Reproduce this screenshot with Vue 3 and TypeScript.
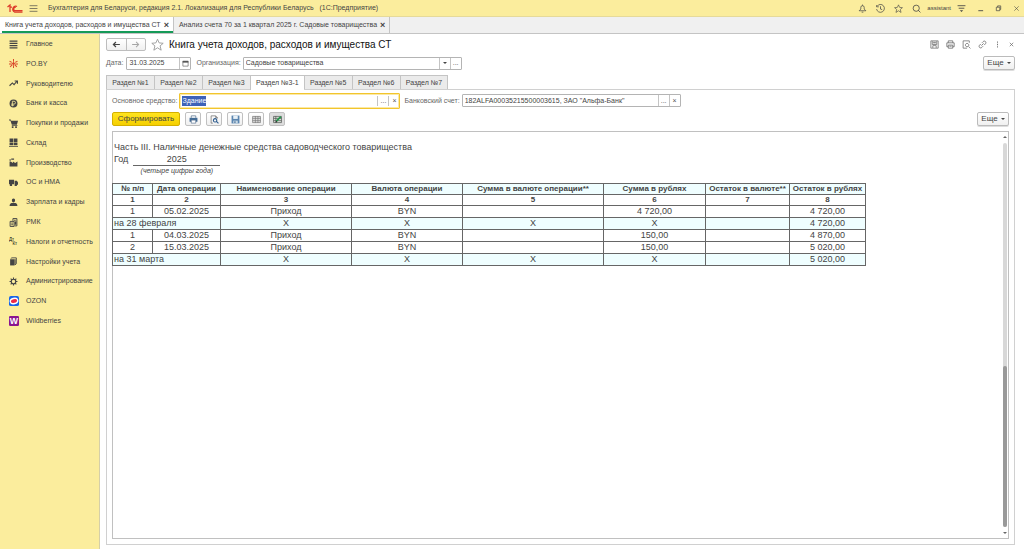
<script setup lang="ts">
import { onMounted, ref } from 'vue'

interface Part { d: string; fill?: string; stroke?: string; width?: number }
interface MenuItem { label: string; icon: string }
interface Row { total: boolean; cells: string[] }

const line = (d: string, width = 1.3, stroke = 'currentColor'): Part => ({ d, fill: 'none', stroke, width })
const solid = (d: string, fill = 'currentColor'): Part => ({ d, fill })

const icons: Record<string, Part[]> = {
  list: [line('M1 2h14M1 6h14M1 10h14M1 14h14', 2)],
  spark: [line('M8 0v5M8 11v5M1 4l4 2M15 4l-4 2M2 14l4-4M14 14l-4-4M0 9h5M11 9h5', 1.8, '#d9482b'), solid('M8 5l3 3-3 3-3-3z', '#d9482b')],
  trend: [line('M1 12l5-5 3 3 5-6M10 3.500h5v5', 2)],
  coin: [solid('M8 1a7 7 0 1 0 0 14A7 7 0 0 0 8 1z'), line('M6 13V4h3a2.500 2.500 0 0 1 0 5H4M4 11h5', 1.4, '#fbed9d')],
  cart: [solid('M0 1h3l1 2h12l-2 7H5L2.500 2.500H0zM5 11h10v1.500H5zM5 13h3v3H5zM11 13h3v3h-3z')],
  store: [solid('M1 1h6.500v6H1zM8.500 1H15v6H8.500zM1 8h6.500v5H1zM8.500 8H15v5H8.500zM0 14h16v1.500H0z')],
  factory: [solid('M1 15V6h2l4 3V6l4 3 4-3v9zM1 5V2h2v3zM4 1h5v2H4z')],
  truck: [solid('M0 3h9v8H0zM10 5h4l2 3v4h-6zM1.500 11h4v3h-4zM10 11h4v3h-4z')],
  person: [solid('M8 1c4 0 3.500 7 0 7S4 1 8 1zM1 14c0-4 3-5 5-5h4c2 0 5 1 5 5z')],
  register: [line('M2 6h7v9H2zM7 5V1h7v13h-4M4 9h3M4 12h3M9 4h3', 1.7), solid('M10 6h3v6h-3z')],
  books: [solid('M2 4h8v11H2z'), line('M3 3l2-1.500h8V12l-2 2M11 4V14', 1.6)],
  gear: [line('M8 4a4 4 0 1 0 0 8 4 4 0 0 0 0-8zM8 1v3M8 12v3M1 8h3M12 8h3M3 3l2 2M11 11l2 2M3 13l2-2M11 5l2-2', 2)],
  bell: [line('M2 12h12l-3-3V6a3 3 0 0 0-6 0v3zM6.500 14.500h3M8 1v2')],
  history: [line('M2 4a7 7 0 1 1-1 5M1 2v3h4M8 4v5l3 1')],
  star: [line('M8 1.500l2 4.500 5 .5-3.800 3.200L12.500 15 8 12l-4.500 3 1.300-5.300L1 6.500 6 6z', 1.1)],
  search: [line('M7.500 2a5.500 5.500 0 1 0 0 11 5.500 5.500 0 0 0 0-11zM11 11l4 4', 1.4)],
  filter: [line('M1 3h14M3 7.500h10', 1.5), solid('M5 11h6l-3 3z')],
  restore: [line('M3 5h8v8H3zM6 5V2h7v8h-2', 1.6)],
  cross: [line('M3 3l10 10M13 3L3 13')],
  smallCross: [line('M4 4l8 8M12 4l-8 8', 1.6)],
  menu: [line('M1 3h14M1 8h14M1 13h14', 1.2)],
  disk: [line('M1.500 1.500h13v13h-13zM4 2v6h8V2M5 14v-4h6v4M6 3v3M8 3v3M10 3v3', 1.3)],
  printer: [line('M4 5V1.500h8V5M4 12H1.500V5h13v7H12M4 9h8v5.500H4zM6 11h4', 1.4)],
  preview: [line('M13 5V1.500H2v13h7M9 6a3 3 0 1 0 .1 0zM11.500 11.500l3.500 3.500', 1.3)],
  link: [line('M6 10l4-4M7 5l2-2c3-3 7 1 4 4l-2 2M9 11l-2 2c-3 3-7-1-4-4l2-2', 1.4)],
  dots: [solid('M7 1h2v3H7zM7 6.500h2v3H7zM7 12h2v3H7z')],
  back: [line('M2 8h12M7 3.500L2.500 8 7 12.500', 2.2)],
  forward: [line('M2 8h12M9 3.500L13.500 8 9 12.500', 1.8)],
  calendar: [line('M2 3h12v11H2z', 1.4), solid('M1.500 2h13v4h-13z')],
  printBlue: [solid('M4 1h8v4H4z', '#fff'), line('M4 5V1.500h8V5', 1.3, '#546f8c'), solid('M1 5h14v7H1z', '#426b96'), solid('M4 9h8v6H4z', '#fff'), line('M4 9h8v5.500H4z', 1.2, '#546f8c')],
  previewBlue: [line('M5 14.500H2v-13h8l3 3v2M10 1.500v3h3', 1.2, '#666'), line('M9 6.500a3 3 0 1 0 .1 0zM11.500 11.500l3.500 3.500', 2, '#315f91')],
  diskBlue: [solid('M1 1h14v14H1z', '#5b86b0'), solid('M4 1h8v6H4z', '#e8f1f7'), solid('M4 10h8v5H4z', '#c9dae6'), solid('M6 11h2v3H6z', '#426b96')],
  grid: [solid('M1 2h14v12H1z', '#ddd'), line('M1 2.500h14v11H1zM1 6h14M1 10h14M6 2v12M10.500 2v12', 1.2, '#777')],
  gridEdit: [solid('M1 2h14v12H1z', '#d9e5da'), line('M1 2.500h14v11H1zM1 6h14M1 10h14M5 2v12', 1.3, '#555'), line('M6 11l8-8', 3, '#24964d'), line('M5 13l2-2', 2, '#333')],
}

const menu: MenuItem[] = [
  { label: 'Главное', icon: 'list' },
  { label: 'PO.BY', icon: 'spark' },
  { label: 'Руководителю', icon: 'trend' },
  { label: 'Банк и касса', icon: 'coin' },
  { label: 'Покупки и продажи', icon: 'cart' },
  { label: 'Склад', icon: 'store' },
  { label: 'Производство', icon: 'factory' },
  { label: 'ОС и НМА', icon: 'truck' },
  { label: 'Зарплата и кадры', icon: 'person' },
  { label: 'РМК', icon: 'register' },
  { label: 'Налоги и отчетность', icon: 'taxes' },
  { label: 'Настройки учета', icon: 'books' },
  { label: 'Администрирование', icon: 'gear' },
  { label: 'OZON', icon: 'ozon' },
  { label: 'Wildberries', icon: 'wb' },
]

const sections = ['Раздел №1', 'Раздел №2', 'Раздел №3', 'Раздел №3-1', 'Раздел №5', 'Раздел №6', 'Раздел №7']
const activeSection = ref('Раздел №3-1')

const columns = ['№ п/п', 'Дата операции', 'Наименование операции', 'Валюта операции', 'Сумма в валюте операции**', 'Сумма в рублях', 'Остаток в валюте**', 'Остаток в рублях']
const rows: Row[] = [
  { total: false, cells: ['1', '05.02.2025', 'Приход', 'BYN', '', '4 720,00', '', '4 720,00'] },
  { total: true, cells: ['на 28 февраля', 'X', 'X', 'X', 'X', '', '4 720,00'] },
  { total: false, cells: ['1', '04.03.2025', 'Приход', 'BYN', '', '150,00', '', '4 870,00'] },
  { total: false, cells: ['2', '15.03.2025', 'Приход', 'BYN', '', '150,00', '', '5 020,00'] },
  { total: true, cells: ['на 31 марта', 'X', 'X', 'X', 'X', '', '5 020,00'] },
]

const date = ref('31.03.2025')
const organization = ref('Садовые товарищества')
const asset = ref('Здание')
const account = ref('182ALFA00035215500003615, ЗАО "Альфа-Банк"')
const assetInput = ref<HTMLInputElement | null>(null)

const systemIcons = [
  { icon: 'bell', label: 'Уведомления' },
  { icon: 'history', label: 'История' },
  { icon: 'star', label: 'Избранное' },
  { icon: 'search', label: 'Поиск' },
]
const formIcons = [
  { icon: 'disk', label: 'Сохранить' },
  { icon: 'printer', label: 'Печать' },
  { icon: 'preview', label: 'Просмотр' },
  { icon: 'link', label: 'Ссылка' },
  { icon: 'dots', label: 'Действия' },
  { icon: 'smallCross', label: 'Закрыть' },
]
const reportIcons = [
  { icon: 'printBlue', label: 'Печать отчета' },
  { icon: 'previewBlue', label: 'Предварительный просмотр' },
  { icon: 'diskBlue', label: 'Сохранить отчет' },
  { icon: 'grid', label: 'Таблица' },
  { icon: 'gridEdit', label: 'Редактирование' },
]

onMounted(() => {
  assetInput.value?.focus()
  assetInput.value?.select()
})
</script>

<template>
  <div class="app">
    <header class="titlebar">
      <svg class="logo" viewBox="0 0 32 18" role="img" aria-label="1С">
        <path d="M1 6l5-4v14M10 6l-3 0" />
        <path d="M20 5a6 6 0 1 0-5 11h16M17.500 7a3 3 0 1 0-2 6h15.500" />
      </svg>
      <button class="plain burger" aria-label="Меню">
        <svg viewBox="0 0 16 16" class="icon"><path v-for="(p, i) in icons.menu" :key="i" :d="p.d" :fill="p.fill" :stroke="p.stroke" :stroke-width="p.width" /></svg>
      </button>
      <span class="apptitle">Бухгалтерия для Беларуси, редакция 2.1. Локализация для Республики Беларусь&nbsp;&nbsp; (1С:Предприятие)</span>
      <div class="system">
        <button v-for="s in systemIcons" :key="s.icon" class="plain" :aria-label="s.label">
          <svg viewBox="0 0 16 16" class="icon"><path v-for="(p, i) in icons[s.icon]" :key="i" :d="p.d" :fill="p.fill" :stroke="p.stroke" :stroke-width="p.width" /></svg>
        </button>
      </div>
      <span class="user">assistant</span>
      <div class="window">
        <button class="plain" aria-label="Настройки"><svg viewBox="0 0 16 16" class="icon"><path v-for="(p, i) in icons.filter" :key="i" :d="p.d" :fill="p.fill" :stroke="p.stroke" :stroke-width="p.width" /></svg></button>
        <button class="plain" aria-label="Свернуть"><svg viewBox="0 0 16 16" class="icon small"><path d="M3 13h11" stroke="currentColor" stroke-width="2" /></svg></button>
        <button class="plain" aria-label="Восстановить"><svg viewBox="0 0 16 16" class="icon small"><path v-for="(p, i) in icons.restore" :key="i" :d="p.d" :fill="p.fill" :stroke="p.stroke" :stroke-width="p.width" /></svg></button>
        <button class="plain" aria-label="Закрыть программу"><svg viewBox="0 0 16 16" class="icon small"><path v-for="(p, i) in icons.cross" :key="i" :d="p.d" :fill="p.fill" :stroke="p.stroke" :stroke-width="p.width" /></svg></button>
      </div>
    </header>

    <nav class="windows">
      <div class="wintab current"><a href="#book">Книга учета доходов, расходов и имущества СТ</a><button class="plain close" aria-label="Закрыть вкладку">×</button></div>
      <div class="wintab"><a href="#account">Анализ счета 70 за 1 квартал 2025 г. Садовые товарищества</a><button class="plain close" aria-label="Закрыть вкладку">×</button></div>
    </nav>

    <div class="body">
      <nav class="sidebar">
        <div class="menu">
          <a v-for="m in menu" :key="m.label" href="#menu">
            <svg v-if="m.icon === 'taxes'" viewBox="0 0 16 16" class="icon"><text x="0" y="7" font-size="8">Дт</text><text x="6" y="15" font-size="8">Кт</text></svg>
            <svg v-else-if="m.icon === 'ozon'" viewBox="0 0 16 16" class="icon brand"><rect width="16" height="16" rx="3" fill="#1764e8" /><ellipse cx="8" cy="8" rx="7" ry="5.500" fill="#fff" transform="rotate(-15 8 8)" /><ellipse cx="8" cy="8" rx="5" ry="3" fill="#ed2947" transform="rotate(-15 8 8)" /></svg>
            <svg v-else-if="m.icon === 'wb'" viewBox="0 0 16 16" class="icon brand"><rect width="16" height="16" rx="2" fill="#8a168f" /><text x="8" y="13" text-anchor="middle" font-size="14" font-weight="bold" fill="#fff">W</text></svg>
            <svg v-else viewBox="0 0 16 16" class="icon"><path v-for="(p, i) in icons[m.icon]" :key="i" :d="p.d" :fill="p.fill" :stroke="p.stroke" :stroke-width="p.width" /></svg>
            <span>{{ m.label }}</span>
          </a>
        </div>
      </nav>

      <main class="form">
        <div class="heading">
          <div class="history">
            <button aria-label="Назад"><svg viewBox="0 0 16 16" class="icon"><path v-for="(p, i) in icons.back" :key="i" :d="p.d" :fill="p.fill" :stroke="p.stroke" :stroke-width="p.width" /></svg></button>
            <button class="disabled" aria-label="Вперед"><svg viewBox="0 0 16 16" class="icon"><path v-for="(p, i) in icons.forward" :key="i" :d="p.d" :fill="p.fill" :stroke="p.stroke" :stroke-width="p.width" /></svg></button>
          </div>
          <button class="plain favorite" aria-label="В избранное"><svg viewBox="0 0 16 16"><path v-for="(p, i) in icons.star" :key="i" :d="p.d" :fill="p.fill" :stroke="p.stroke" :stroke-width="p.width" /></svg></button>
          <h1>Книга учета доходов, расходов и имущества СТ</h1>
          <div class="formicons">
            <button v-for="f in formIcons" :key="f.icon" class="plain" :aria-label="f.label">
              <svg viewBox="0 0 16 16" class="icon" :class="{ small: f.icon === 'smallCross' || f.icon === 'dots' }"><path v-for="(p, i) in icons[f.icon]" :key="i" :d="p.d" :fill="p.fill" :stroke="p.stroke" :stroke-width="p.width" /></svg>
            </button>
          </div>
        </div>

        <div class="params">
          <label for="date">Дата:</label>
          <div class="field date">
            <input id="date" v-model="date" type="text">
            <button aria-label="Календарь"><svg viewBox="0 0 16 16" class="icon small"><path v-for="(p, i) in icons.calendar" :key="i" :d="p.d" :fill="p.fill" :stroke="p.stroke" :stroke-width="p.width" /></svg></button>
          </div>
          <label for="organization" class="orglabel">Организация:</label>
          <div class="field organization">
            <input id="organization" v-model="organization" type="text">
            <button aria-label="Список организаций"><i class="caret"></i></button>
            <button aria-label="Выбрать организацию">...</button>
          </div>
          <button class="more">Еще<i class="caret"></i></button>
        </div>

        <div class="sections" role="tablist">
          <button v-for="s in sections" :key="s" role="tab" :aria-selected="s === activeSection" :class="{ active: s === activeSection }" @click="activeSection = s">{{ s }}</button>
        </div>

        <section class="panel">
          <div class="filters">
            <label for="asset">Основное средство:</label>
            <div class="field asset">
              <input id="asset" ref="assetInput" v-model="asset" type="text">
              <button aria-label="Выбрать средство">...</button>
              <button aria-label="Очистить средство">×</button>
            </div>
            <label for="account">Банковский счет:</label>
            <div class="field account">
              <input id="account" v-model="account" type="text">
              <button aria-label="Выбрать счет">...</button>
              <button aria-label="Очистить счет">×</button>
            </div>
          </div>

          <div class="commands">
            <button class="generate">Сформировать</button>
            <button v-for="r in reportIcons" :key="r.icon" class="tool" :class="{ pressed: r.icon === 'gridEdit' }" :aria-label="r.label">
              <svg viewBox="0 0 16 16" class="icon"><path v-for="(p, i) in icons[r.icon]" :key="i" :d="p.d" :fill="p.fill" :stroke="p.stroke" :stroke-width="p.width" /></svg>
            </button>
            <button class="more">Еще<i class="caret"></i></button>
          </div>

          <div class="sheet">
            <div class="report">
              <h2>Часть III. Наличные денежные средства садоводческого товарищества</h2>
              <div class="year">
                <span>Год</span>
                <div class="yearvalue"><span class="value">2025</span><em>(четыре цифры года)</em></div>
              </div>
              <table>
                <colgroup><col v-for="(c, i) in columns" :key="c" :class="'c' + (i + 1)"></colgroup>
                <thead>
                  <tr class="tint"><th v-for="c in columns" :key="c">{{ c }}</th></tr>
                  <tr><th v-for="(c, i) in columns" :key="c">{{ i + 1 }}</th></tr>
                </thead>
                <tbody>
                  <tr v-for="(r, ri) in rows" :key="ri" :class="{ tint: r.total }">
                    <td v-for="(c, ci) in r.cells" :key="ci" :colspan="r.total && ci === 0 ? 2 : 1" :class="{ left: r.total && ci === 0 }">{{ c }}</td>
                  </tr>
                </tbody>
              </table>
            </div>
            <div class="scroll" aria-hidden="true">
              <i class="arrow up"></i>
              <div class="track"><div class="thumb"></div></div>
              <i class="arrow down"></i>
            </div>
          </div>
        </section>
      </main>
    </div>
  </div>
</template>

<style>
body { margin: 0; }
</style>

<style scoped>
* { box-sizing: border-box; }
.app {
  display: flex;
  flex-direction: column;
  min-height: 100vh;
  background: #fff;
  color: #444;
  font: 7px/10px "Liberation Sans", Arial, sans-serif;
}
button, input { font: inherit; color: inherit; }
button { display: flex; align-items: center; justify-content: center; padding: 0; }
a { color: inherit; text-decoration: none; }
.plain { border: 0; background: none; }
.icon { display: block; width: 9px; height: 9px; flex: none; }
.icon.small { width: 7px; height: 7px; }

.titlebar { display: flex; align-items: center; height: 17px; padding: 0 4px 0 7px; background: #fbed9d; border-bottom: 1px solid #e6da9a; }
.logo { width: 16px; height: 9px; fill: none; stroke: #dc3b2a; stroke-width: 2.5; }
.burger { margin: 0 10px 0 6px; }
.apptitle { flex: 1; white-space: nowrap; }
.system { display: flex; gap: 9px; margin-right: 6px; }
.user { font-size: 6px; }
.window { display: flex; align-items: center; gap: 11px; margin-left: 6px; }

.windows { display: flex; height: 17px; background: #f0f0f0; border-bottom: 1px solid #c4c4c4; }
.wintab { display: flex; align-items: center; gap: 3px; padding: 0 4px 0 5px; border-right: 1px solid #c4c4c4; white-space: nowrap; }
.wintab.current { background: linear-gradient(#159a58, #159a58) 2px 100% / 100% 2px no-repeat #fff; }
.close { font-size: 9px; font-weight: bold; }

.body { display: flex; flex: 1; }
.sidebar { width: 100px; flex: none; padding: 3px 0 0 9px; background: #fbed9d; border-right: 1px solid #d5cfa8; }
.menu { display: flex; flex-direction: column; justify-content: space-between; min-height: 291px; }
.menu a { display: flex; align-items: center; gap: 8px; height: 14px; white-space: nowrap; }
.menu .brand { width: 10px; height: 10px; margin-right: -1px; }

.form { display: flex; flex-direction: column; flex: 1; min-width: 0; padding: 4px 9px 4px 6px; }
.heading { display: flex; align-items: center; height: 13px; }
.history { display: flex; width: 40px; height: 13px; border: 1px solid #bdbdbd; border-radius: 2px; background: linear-gradient(#fff, #f0f0f0); }
.history button { flex: 1; border: 0; background: none; }
.history .disabled { border-left: 1px solid #bdbdbd; color: #a5a5a5; }
.favorite { margin: 0 5px; color: #999; }
.favorite svg { width: 13px; height: 13px; }
h1 { flex: 1; margin: 0; color: #111; font-size: 10px; line-height: 13px; font-weight: normal; white-space: nowrap; }
.formicons { display: flex; align-items: center; gap: 7px; color: #666; }

.params { display: flex; align-items: center; height: 14px; margin-top: 5px; }
label { color: #666; white-space: nowrap; }
.field { display: flex; height: 13px; border: 1px solid #b4b4b4; border-radius: 1px; background: #fff; }
.field input { flex: 1; width: 0; min-width: 0; padding: 0 2px; border: 0; outline: 0; background: none; }
.field button { width: 11px; border: 0; border-left: 1px solid #c4c4c4; background: none; color: #555; }
.date { width: 65px; margin-left: 3px; }
.orglabel { margin-left: 5px; }
.organization { width: 219px; margin-left: 2px; }
.caret { border: 2px solid transparent; border-top-color: #444; border-bottom: 0; }
.more { gap: 3px; width: 32px; height: 14px; margin-left: auto; border: 1px solid #bbb; border-radius: 2px; background: linear-gradient(#fff, #f0f0f0); box-shadow: 0 1px #ddd; font-size: 8px; }

.sections { display: flex; margin-top: 5px; }
.sections button { min-width: 48px; height: 14px; padding: 0 5px; border: 1px solid #c4c4c4; border-right: 0; border-bottom: 0; background: #ebebeb; }
.sections button:last-child { border-right: 1px solid #c4c4c4; }
.sections .active { height: 15px; margin-bottom: -1px; background: #fff; z-index: 1; }
.panel { display: flex; flex-direction: column; flex: 1; padding: 3px 5px 5px; border: 1px solid #d0d0d0; }
.filters { display: flex; align-items: center; height: 15px; }
.field.asset { width: 221px; height: 16px; margin: 0 4px 0 2px; border: 1px solid #f2c52d; box-shadow: inset 0 0 0 1px #fbe9a6; }
.asset button { margin: 2px 0; }
.asset input::selection { background: #3e62b8; color: #fff; }
.account { width: 219px; margin-left: 2px; }
.commands { display: flex; align-items: center; gap: 5px; height: 14px; margin-top: 4px; }
.generate { width: 68px; height: 14px; border: 1px solid #d4b000; border-radius: 2px; background: linear-gradient(#ffe41f, #f5cf00); font-size: 8px; }
.tool { width: 16px; height: 14px; border: 1px solid #c0c0c0; border-radius: 2px; background: linear-gradient(#fff, #f0f0f0); }
.pressed { background: #ddd; }

.sheet { display: flex; flex: 1; margin-top: 5px; border: 1px solid #c0c0c0; }
.report { flex: 1; min-width: 0; padding-top: 9px; font-size: 9px; line-height: 11px; }
h2 { margin: 0 0 0 1px; font-size: 9px; line-height: 12px; font-weight: normal; }
.year { display: flex; gap: 5px; margin: 1px 0 7px 1px; }
.yearvalue { display: flex; flex-direction: column; width: 87px; text-align: center; }
.value { border-bottom: 1px solid #666; }
em { font-size: 7px; line-height: 10px; }
table { width: 754px; margin-left: -1px; table-layout: fixed; border-collapse: collapse; }
.c1 { width: 40px; } .c2 { width: 68px; } .c3 { width: 131px; } .c4 { width: 111px; }
.c5 { width: 141px; } .c6 { width: 102px; } .c7 { width: 84px; } .c8 { width: 76px; }
th, td { padding: 0; border: 1px solid #666; text-align: center; white-space: nowrap; }
td { height: 12px; }
th { height: 11px; font-size: 8px; line-height: 10px; }
td.left { padding-left: 1px; text-align: left; }
.tint { background: #effeff; }
.scroll { display: flex; flex-direction: column; align-items: center; gap: 5px; width: 4px; margin: 4px 1px; }
.arrow { border: 2px solid transparent; }
.up { border-bottom-color: #666; border-top: 0; }
.down { border-top-color: #666; border-bottom: 0; }
.track { display: flex; flex: 1; align-items: flex-end; width: 4px; background: #d8d8d8; border-radius: 2px; }
.thumb { width: 4px; height: 42%; background: #999; border-radius: 2px; }
</style>
